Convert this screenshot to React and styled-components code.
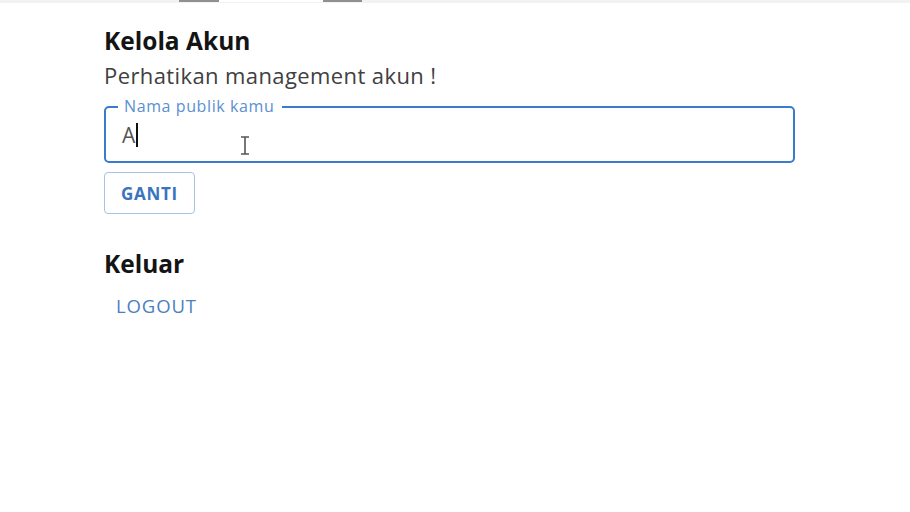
import styled, { createGlobalStyle } from "styled-components";

const GlobalStyle = createGlobalStyle`
  body {
    margin: 0;
    background: #ffffff;
    font-family: "Open Sans", "Noto Sans", sans-serif;
  }
`;

const TopStrip = styled.div`
  height: 3px;
  background: #f2f2f2;
  display: flex;
  align-items: flex-start;
  padding-left: 179px;
`;

const StripPart = styled.div`
  width: ${(p) => p.w}px;
  height: 2px;
  background: ${(p) => (p.dark ? "#909090" : "#ffffff")};
`;

const Page = styled.main`
  width: 691px;
  padding: 23px 0 0 104px;
`;

const Heading = styled.h2`
  margin: 0;
  font-size: 24.5px;
  font-weight: 700;
  color: #141414;
  line-height: 30px;
`;

const Subtitle = styled.p`
  margin: 5px 0 0;
  font-size: 22px;
  color: #404040;
  line-height: 28px;
  letter-spacing: 0.4px;
`;

const Field = styled.div`
  position: relative;
  box-sizing: border-box;
  margin-top: 17px;
  height: 57px;
  padding: 0 16px;
  border: 2px solid #3a7bcc;
  border-radius: 5px;
  display: flex;
  align-items: center;
`;

const Label = styled.span`
  position: absolute;
  left: 12px;
  top: -10px;
  padding: 0 8px 0 6px;
  background: #ffffff;
  font-size: 16px;
  line-height: 16px;
  color: #5a8fd2;
  letter-spacing: 0.6px;
`;

const Value = styled.span`
  font-size: 21px;
  color: #555555;
  display: flex;
  align-items: center;
`;

const Caret = styled.span`
  display: inline-block;
  width: 2px;
  height: 24px;
  background: #111111;
  margin-left: 1px;
`;

const Pointer = styled.svg`
  position: absolute;
  left: 134px;
  top: 28px;
`;

const OutlineButton = styled.button`
  display: block;
  margin-top: 9px;
  width: 91px;
  height: 42px;
  background: #ffffff;
  border: 1px solid #a6c2e6;
  border-radius: 4px;
  font-family: inherit;
  font-size: 17px;
  font-weight: 700;
  color: #3a74c0;
  letter-spacing: 0.7px;
`;

const Section = styled.section`
  margin-top: 34.5px;
`;

const TextButton = styled.button`
  display: block;
  margin: 15px 0 0;
  padding: 0 12px;
  background: none;
  border: none;
  font-family: inherit;
  font-size: 18.5px;
  line-height: 24px;
  color: #4a7fc2;
  letter-spacing: 0.9px;
`;

export default function App() {
  return (
    <>
      <GlobalStyle />
      <TopStrip>
        <StripPart w={40} dark />
        <StripPart w={104} />
        <StripPart w={39} dark />
      </TopStrip>
      <Page>
        <Heading>Kelola Akun</Heading>
        <Subtitle>Perhatikan management akun !</Subtitle>
        <Field>
          <Label>Nama publik kamu</Label>
          <Value>
            A<Caret />
          </Value>
          <Pointer width="10" height="19" viewBox="0 0 10 19">
            <path d="M1 1h8M5 1v17M1 18h8" stroke="#555" strokeWidth="1.6" fill="none" />
          </Pointer>
        </Field>
        <OutlineButton>GANTI</OutlineButton>
        <Section>
          <Heading>Keluar</Heading>
          <TextButton>LOGOUT</TextButton>
        </Section>
      </Page>
    </>
  );
}
